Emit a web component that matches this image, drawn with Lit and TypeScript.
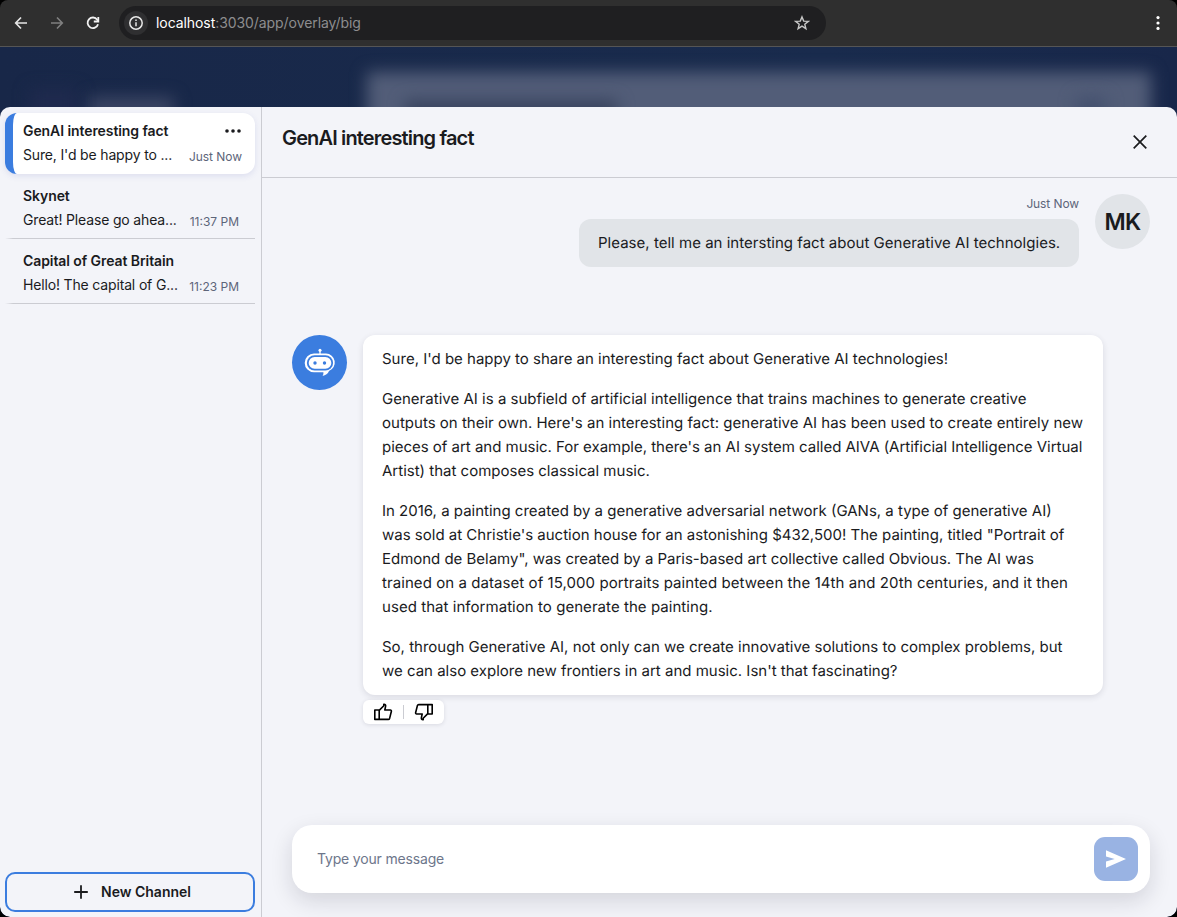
import { LitElement, html, css } from "lit";
import { customElement, property } from "lit/decorators.js";

interface Channel {
  title: string;
  preview: string;
  time: string;
}

interface Line {
  text: string;
  tracking?: number;
}

const channels: Channel[] = [
  { title: "GenAI interesting fact", preview: "Sure, I'd be happy to ...", time: "Just Now" },
  { title: "Skynet", preview: "Great! Please go ahea...", time: "11:37 PM" },
  { title: "Capital of Great Britain", preview: "Hello! The capital of G...", time: "11:23 PM" },
];

const answer: Line[][] = [
  [{ text: "Sure, I'd be happy to share an interesting fact about Generative AI technologies!" }],
  [
    { text: "Generative AI is a subfield of artificial intelligence that trains machines to generate creative", tracking: 0.015 },
    { text: "outputs on their own. Here's an interesting fact: generative AI has been used to create entirely new", tracking: 0.01 },
    { text: "pieces of art and music. For example, there's an AI system called AIVA (Artificial Intelligence Virtual", tracking: -0.02 },
    { text: "Artist) that composes classical music." },
  ],
  [
    { text: "In 2016, a painting created by a generative adversarial network (GANs, a type of generative AI)" },
    { text: 'was sold at Christie\'s auction house for an astonishing $432,500! The painting, titled "Portrait of' },
    { text: 'Edmond de Belamy", was created by a Paris-based art collective called Obvious. The AI was', tracking: -0.02 },
    { text: "trained on a dataset of 15,000 portraits painted between the 14th and 20th centuries, and it then", tracking: 0.07 },
    { text: "used that information to generate the painting.", tracking: 0.05 },
  ],
  [
    { text: "So, through Generative AI, not only can we create innovative solutions to complex problems, but" },
    { text: "we can also explore new frontiers in art and music. Isn't that fascinating?" },
  ],
];

@customElement("browser-bar")
export class BrowserBar extends LitElement {
  static styles = css`
    :host {
      display: flex;
      align-items: center;
      box-sizing: border-box;
      height: 47px;
      padding-left: 13px;
      background: #2f2f2f;
      border-bottom: 1px solid #555;
      border-radius: 8px 8px 0 0;
      font-family: Inter, sans-serif;
    }
    svg { display: block; flex: none; }
    .nav { display: flex; gap: 20px; }
    .address {
      display: flex;
      align-items: center;
      box-sizing: border-box;
      width: 707px;
      height: 34px;
      margin-left: 18px;
      padding: 0 16px 0 5px;
      border-radius: 17px;
      background: #1f1f21;
    }
    .info {
      display: grid;
      place-items: center;
      width: 24px;
      height: 24px;
      border-radius: 50%;
      background: #2f2f31;
    }
    .url {
      flex: 1;
      margin-left: 8px;
      font-size: 14px;
      line-height: 20px;
      letter-spacing: -0.07px;
      color: #8d8d8f;
      white-space: nowrap;
    }
    .host { color: #fff; }
    .menu { margin-left: auto; margin-right: 11px; }
  `;

  render() {
    return html`
      <div class="nav">
        <svg width="16" height="16" viewBox="0 0 16 16" fill="none" stroke="#e6e6e6" stroke-width="1.7">
          <path d="M14 8H3M8 2.5 2.7 8 8 13.5" />
        </svg>
        <svg width="16" height="16" viewBox="0 0 16 16" fill="none" stroke="#808080" stroke-width="1.6">
          <path d="M2 8h11M8 2.5 13.3 8 8 13.5" />
        </svg>
        <svg width="16" height="16" viewBox="0 0 16 16" fill="none" stroke="#f2f2f2" stroke-width="1.8">
          <path d="M13 9.2A5.3 5.3 0 1 1 12.2 4.7L13.2 6" />
          <path d="M13.3 2v4.5H8.8" />
        </svg>
      </div>
      <div class="address">
        <span class="info">
          <svg width="16" height="16" viewBox="0 0 16 16" fill="none" stroke="#e8e8e8" stroke-width="1.5">
            <circle cx="8" cy="8" r="6.2" />
            <path d="M8 7.2v4M8 4.6v1.5" />
          </svg>
        </span>
        <span class="url"><span class="host">localhost</span>:3030/app/overlay/big</span>
        <svg width="16" height="16" viewBox="0 0 16 16" fill="none" stroke="#c8c8c8" stroke-width="1.4">
          <path d="m8 1.9 1.7 4.2 4.6.3-3.5 2.9 1.1 4.4L8 11.2l-3.9 2.5 1.1-4.4-3.5-2.9 4.6-.3z" />
        </svg>
      </div>
      <svg class="menu" width="16" height="16" viewBox="0 0 16 16" fill="#fff">
        <circle cx="8" cy="2.6" r="1.6" />
        <circle cx="8" cy="8" r="1.6" />
        <circle cx="8" cy="13.4" r="1.6" />
      </svg>
    `;
  }
}

@customElement("channel-item")
export class ChannelItem extends LitElement {
  @property({ attribute: false }) channel!: Channel;
  @property({ type: Boolean, reflect: true }) active = false;

  static styles = css`
    :host {
      display: block;
      box-sizing: border-box;
      height: 65px;
      padding: 9px 16px 0 18px;
      background: linear-gradient(90deg, transparent, #cbccd2 8px) bottom / 100% 1px no-repeat;
      color: #1a1b1e;
    }
    :host([active]) {
      height: 61px;
      padding: 5px 14px 0 10px;
      border-left: 8px solid #3b7ddf;
      border-radius: 12px;
      background: #fff;
      box-shadow: 0 2px 6px rgba(70, 80, 170, 0.13);
    }
    .row { display: flex; align-items: center; justify-content: space-between; height: 24px; }
    .title { font-size: 14px; font-weight: 600; letter-spacing: -0.08px; white-space: nowrap; }
    .preview { font-size: 14px; letter-spacing: -0.16px; white-space: nowrap; }
    .time { padding-top: 5px; font-size: 12px; color: #5d6579; white-space: nowrap; }
    :host([active]) .time { margin-right: -1px; letter-spacing: -0.05px; }
    .dots { display: block; margin-top: 2px; }
  `;

  render() {
    return html`
      <div class="row">
        <span class="title">${this.channel.title}</span>
        ${this.active
          ? html`<svg class="dots" width="16" height="6" viewBox="0 0 16 6" fill="#1a1b1e">
              <circle cx="2" cy="3" r="1.8" /><circle cx="8" cy="3" r="1.8" /><circle cx="14" cy="3" r="1.8" />
            </svg>`
          : null}
      </div>
      <div class="row">
        <span class="preview">${this.channel.preview}</span>
        <span class="time">${this.channel.time}</span>
      </div>
    `;
  }
}

@customElement("app-root")
export class AppRoot extends LitElement {
  static styles = css`
    :host {
      display: flex;
      flex-direction: column;
      height: 917px;
      overflow: hidden;
      background: #000;
      font-family: Inter, sans-serif;
      color: #1a1b1e;
    }
    * { box-sizing: border-box; }
    svg { display: block; flex: none; }
    browser-bar { flex: none; }
    .stage {
      position: relative;
      flex: 1;
      display: flex;
      flex-direction: column;
      padding-top: 60px;
      overflow: hidden;
      border-radius: 0 0 10px 10px;
      background: linear-gradient(90deg, #182748, #192b4d 70%, #18274a);
    }
    .ghost { position: absolute; filter: blur(8px); }
    .ghost-card { left: 367px; top: 25px; width: 784px; height: 120px; background: #525d78; }
    .ghost-text { left: 405px; top: 53px; width: 212px; height: 24px; background: #39445f; }
    .ghost-action { left: 1076px; top: 50px; width: 30px; height: 24px; background: #44516f; }
    .ghost-logo { left: 88px; top: 50px; width: 86px; height: 22px; background: #3c4664; }
    .ghost-mark { left: 30px; top: 42px; width: 48px; height: 34px; background: #1f2a4e; }
    .panel {
      position: relative;
      flex: 1;
      display: flex;
      min-height: 0;
      overflow: hidden;
      border-radius: 10px;
      background: #f3f4f9;
    }
    .sidebar {
      display: flex;
      flex-direction: column;
      width: 262px;
      padding: 6px 6px 5px 5px;
      border-right: 1px solid #cbccd2;
    }
    .sidebar channel-item { width: 250px; }
    .new-channel {
      display: flex;
      align-items: center;
      justify-content: center;
      gap: 12px;
      width: 250px;
      height: 40px;
      margin-top: auto;
      padding: 0 0 0 4px;
      border: 2px solid #3b7ddf;
      border-radius: 10px;
      background: none;
      font: 600 14px Inter, sans-serif;
      color: #1a1b1e;
    }
    .new-label { padding-bottom: 2px; }
    .chat { flex: 1; display: flex; flex-direction: column; min-width: 0; }
    .chat-head {
      display: flex;
      justify-content: space-between;
      height: 71px;
      padding: 19px 29px 0 20px;
      border-bottom: 1px solid #cbccd2;
    }
    .chat-title { margin: 0; font-size: 20px; font-weight: 600; line-height: 24px; letter-spacing: -0.85px; }
    .close { margin-top: 8px; }
    .thread { flex: 1; padding: 16px 27px 0 30px; }
    .mine { display: flex; justify-content: flex-end; gap: 16px; }
    .mine-body { display: flex; flex-direction: column; align-items: flex-end; }
    .stamp { height: 25px; padding-top: 2px; font-size: 12px; line-height: 15px; letter-spacing: -0.1px; color: #5d6579; }
    .bubble-mine {
      width: 500px;
      height: 48px;
      border-radius: 12px;
      background: #e1e4e8;
      padding: 0 19px;
      font-size: 15px;
      line-height: 48px;
      letter-spacing: 0.02px;
      white-space: nowrap;
      text-rendering: geometricPrecision;
    }
    .avatar { display: grid; place-items: center; flex: none; width: 55px; height: 55px; border-radius: 50%; }
    .user { background: #e1e4e8; font-size: 23px; font-weight: 600; letter-spacing: -0.6px; }
    .bot { background: #3b7ddf; }
    .reply { display: flex; gap: 16px; margin-top: 68px; }
    .bubble-bot {
      width: 740px;
      height: 360px;
      padding: 12px 0 12px 19px;
      border-radius: 12px;
      background: #fff;
      box-shadow: 0 2px 6px rgba(30, 35, 60, 0.12);
      font-size: 15px;
      line-height: 24px;
      text-rendering: geometricPrecision;
    }
    .bubble-bot p { margin: 0 0 16px; }
    .line { display: block; white-space: nowrap; }
    .votes {
      display: flex;
      align-items: center;
      width: 81px;
      height: 24px;
      margin-top: 5px;
      padding: 0 10px;
      border-radius: 6px;
      background: #fff;
      box-shadow: 0 1px 4px rgba(30, 35, 60, 0.12);
    }
    .votes-rule { width: 1px; height: 14px; margin: 0 10px; background: #cbccd2; }
    .composer {
      display: flex;
      align-items: center;
      justify-content: space-between;
      width: 858px;
      height: 68px;
      margin: 0 0 24px 30px;
      padding: 0 12px 0 25px;
      border-radius: 20px;
      background: #fff;
      box-shadow: 0 8px 22px rgba(20, 22, 40, 0.14);
    }
    .placeholder { padding-bottom: 2px; font-size: 14px; letter-spacing: -0.17px; color: #6d768b; }
    .send { display: grid; place-items: center; width: 44px; height: 44px; border-radius: 11px; background: #99b3e3; }
  `;

  render() {
    return html`
      <browser-bar></browser-bar>
      <div class="stage">
        <div class="ghost ghost-card"></div>
        <div class="ghost ghost-text"></div>
        <div class="ghost ghost-action"></div>
        <div class="ghost ghost-logo"></div>
        <div class="ghost ghost-mark"></div>
        <div class="panel">
          <aside class="sidebar">
            ${channels.map((c, i) => html`<channel-item .channel=${c} ?active=${i === 0}></channel-item>`)}
            <button class="new-channel">
              <svg width="16" height="16" viewBox="0 0 16 16" fill="none" stroke="#1a1b1e" stroke-width="1.8">
                <path d="M8 1.2v13.6M1.2 8h13.6" />
              </svg>
              <span class="new-label">New Channel</span>
            </button>
          </aside>
          <main class="chat">
            <header class="chat-head">
              <h1 class="chat-title">GenAI interesting fact</h1>
              <svg class="close" width="16" height="16" viewBox="0 0 16 16" fill="none" stroke="#1a1b1e" stroke-width="1.7">
                <path d="m1.7 1.7 12.6 12.6M14.3 1.7 1.7 14.3" />
              </svg>
            </header>
            <section class="thread">
              <div class="mine">
                <div class="mine-body">
                  <div class="stamp">Just Now</div>
                  <div class="bubble-mine">Please, tell me an intersting fact about Generative AI technolgies.</div>
                </div>
                <div class="avatar user">MK</div>
              </div>
              <div class="reply">
                <div class="avatar bot">
                  <svg width="32" height="30" viewBox="0 0 32 30">
                    <circle cx="16" cy="2.2" r="1.5" fill="#fff" />
                    <path d="M16 2v4.5" stroke="#fff" stroke-width="1.3" />
                    <path
                      d="M10 5.6h12a9 9 0 0 1 3 17.4c-1.2 2.8-3.3 4.4-6.5 5 .8-1 1-2.2.9-3.8H10a9.3 9.3 0 0 1 0-18.6z"
                      fill="#fff"
                    />
                    <rect x="2.9" y="7.2" width="26.2" height="15.4" rx="7.7" fill="#3b7ddf" />
                    <rect x="4.7" y="9" width="22.6" height="11.8" rx="5.9" fill="#fff" />
                    <circle cx="11" cy="15" r="1.7" fill="#3b7ddf" />
                    <circle cx="20.5" cy="15" r="1.7" fill="#3b7ddf" />
                  </svg>
                </div>
                <div>
                  <div class="bubble-bot">
                    ${answer.map(
                      (lines) => html`<p>
                        ${lines.map((l) => html`<span class="line" style="letter-spacing: ${l.tracking ?? 0}px">${l.text}</span>`)}
                      </p>`
                    )}
                  </div>
                  <div class="votes">
                    <svg width="20" height="18" viewBox="0 0 20 18" fill="none" stroke="#000" stroke-width="1.6" stroke-linejoin="round">
                      <path d="M1.8 7h4.4v9.4H1.8zM6.2 7.4l4.6-4.6V1.3c1.4-.2 2.1.6 1.8 2L11.8 7h5.6c.7 0 1.1.6 1 1.3l-1.8 7.1c-.2.6-.6 1-1.3 1H6.2" />
                    </svg>
                    <span class="votes-rule"></span>
                    <svg width="20" height="18" viewBox="0 0 20 18" fill="none" stroke="#000" stroke-width="1.6" stroke-linejoin="round">
                      <path d="M18.2 11h-4.4V1.6h4.4zM13.8 10.6l-4.6 4.6v1.5c-1.4.2-2.1-.6-1.8-2l.8-3.7H2.6c-.7 0-1.1-.6-1-1.3l1.8-7.1c.2-.6.6-1 1.3-1h9.1" />
                    </svg>
                  </div>
                </div>
              </div>
            </section>
            <div class="composer">
              <span class="placeholder">Type your message</span>
              <span class="send">
                <svg width="22" height="20" viewBox="0 0 22 20" fill="#fff"><path d="M1 1.2 21 10 1 18.8v-6.3l8.7-2.5L1 7.5z" /></svg>
              </span>
            </div>
          </main>
        </div>
      </div>
    `;
  }
}
